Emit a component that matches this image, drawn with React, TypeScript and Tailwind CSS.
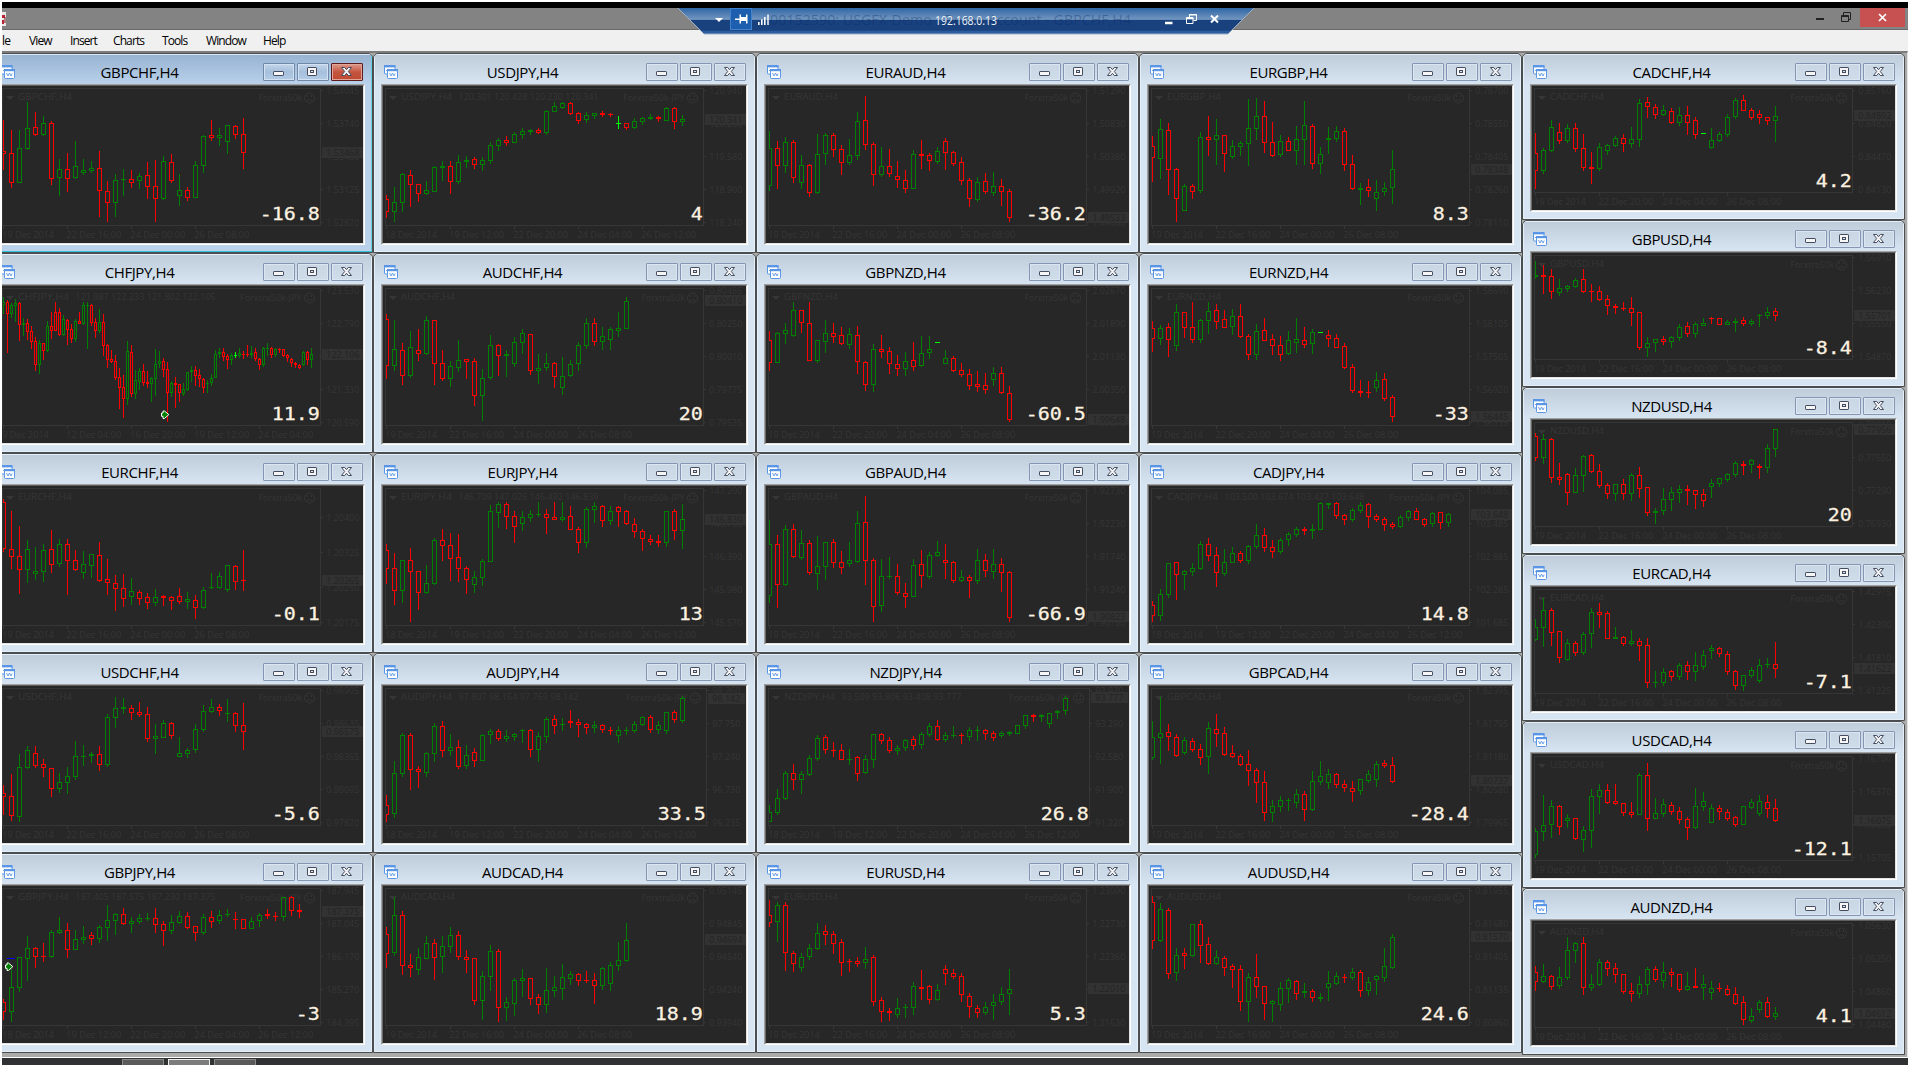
import React from "react";

type Quote = {
  symbol: string;
  pips: string;
  /** feed units per screen pixel and the pixel row where the chart starts */
  unit: number;
  origin: number;
  axis: string[];
  axisY?: number[];
  price: [string, number];
  dates: string[];
  ohlc?: string;
  step?: number;
  right?: number;
  marker?: [number, number];
  dash?: [number, number];
  feed: string;
};

const DATES_A = ["19 Dec 2014", "22 Dec 16:00", "24 Dec 00:00", "26 Dec 08:00"];
const DATES_B = ["19 Dec 2014", "22 Dec 20:00", "24 Dec 04:00", "26 Dec 08:00"];
const DATES_J = ["18 Dec 2014", "19 Dec 12:00", "22 Dec 20:00", "24 Dec 04:00", "26 Dec 12:00"];
const DATES_C = ["9 Dec 2014", "12 Dec 04:00", "16 Dec 20:00", "19 Dec 12:00", "24 Dec 04:00"];

// Each feed entry: colour letter, then high, body top, body bottom and low.
const GBPCHF: Quote = {
  symbol: "GBPCHF", pips: "-16.8", unit: 3, origin: 86, dates: DATES_A,
  axis: ["1.54045", "1.53740", "1.53430", "1.53125", "1.52820"], price: ["1.53468", 66],
  feed: "r360,453,461,510 r390,459,548,563 g390,444,548,548 g306,384,447,449 r336,381,405,407 g348,369,405,408 r363,369,537,554 g477,507,534,587 r459,507,537,575 g423,498,534,537 g477,510,518,524 g483,504,514,519 r453,504,573,650 r543,573,608,665 g522,540,608,650 g507,537,540,587 r510,537,549,563 g519,528,543,566 r486,525,561,597 r480,558,597,665 g468,483,597,600 r462,486,543,548 g522,570,588,617 r561,570,594,602 g483,495,593,594 g405,408,498,518 r360,405,413,423 g384,405,413,438 g375,375,426,461 r375,378,405,417 r354,402,458,507",
};
const CHFJPY: Quote = {
  symbol: "CHFJPY", pips: "11.9", unit: 3, origin: 286, dates: DATES_C, step: 4, marker: [161, 124],
  ohlc: "121.987 122.233 121.802 122.106",
  axis: ["123.530", "122.790", "122.060", "121.330", "120.590"], price: ["122.106", 68],
  feed: "g891,906,914,941 r900,906,941,1058 g909,915,941,953 g897,909,917,965 r906,909,974,1022 g954,969,974,1008 r957,969,995,1020 r978,993,1025,1047 r1010,1023,1094,1113 g1020,1029,1094,1121 r1029,1030,1053,1080 g963,978,1053,1056 r936,978,992,1016 r906,936,992,992 r924,936,1005,1007 g945,957,1005,1007 r957,960,990,1035 r972,987,1018,1030 g957,963,1017,1026 r936,963,971,973 g906,915,971,974 g906,915,918,1047 r912,915,969,977 r954,966,992,1013 g927,966,992,998 r942,966,1038,1068 r1032,1035,1080,1104 r1050,1078,1085,1090 r1065,1083,1133,1140 r1104,1131,1163,1226 r1125,1161,1197,1253 g1023,1053,1197,1214 r1035,1055,1181,1192 g1110,1140,1181,1197 g1104,1113,1145,1170 r1092,1113,1150,1157 r1113,1147,1151,1165 g1130,1134,1151,1205 g1047,1092,1136,1188 g1053,1083,1092,1104 r1074,1083,1109,1130 r1086,1107,1180,1265 g1143,1149,1180,1190 r1131,1150,1155,1224 r1152,1152,1180,1205 g1150,1167,1183,1187 g1116,1116,1170,1173 g1098,1110,1117,1145 r1098,1110,1127,1158 r1107,1125,1138,1160 r1134,1137,1163,1180 g1140,1148,1151,1178 g1122,1134,1149,1158 g1050,1062,1133,1133 g1044,1056,1063,1075 r1044,1056,1070,1083 r1062,1068,1080,1106 g1059,1065,1080,1094 l1056,1065,1067,1074 g1044,1059,1067,1074 r1053,1062,1066,1078 r1035,1062,1066,1070 g1038,1060,1066,1074 r1044,1056,1077,1083 r1074,1077,1094,1110 g1040,1044,1094,1100 g1029,1044,1047,1068 r1041,1044,1065,1074 g1044,1047,1065,1071 r1044,1046,1049,1060 r1047,1047,1067,1071 r1062,1065,1075,1085 r1074,1077,1090,1102 r1086,1090,1095,1104 r1092,1095,1103,1106 g1053,1056,1094,1098 r1053,1056,1080,1094 g1044,1062,1080,1104",
};
const EURCHF: Quote = {
  symbol: "EURCHF", pips: "-0.1", unit: 2.505, origin: 36, dates: DATES_A,
  axis: ["1.20400", "1.20325", "1.20250", "1.20175"], axisY: [31, 66, 101, 136], price: ["1.20265", 94],
  feed: "r123,131,248,255 r153,248,268,298 r190,266,300,361 g225,248,300,333 g243,303,311,326 g235,250,305,331 r200,248,288,308 g223,235,286,293 r223,235,278,363 r250,276,300,303 g253,286,308,323 g261,261,291,321 r230,263,328,330 r273,323,333,363 r314,333,348,403 r311,345,373,393 g321,353,368,388 r350,355,373,388 r358,368,383,398 g348,368,383,391 r363,366,370,391 r365,367,378,401 r345,365,381,386 g355,373,381,398 r363,376,396,423 g343,350,396,398 g308,343,346,348 g306,316,346,348 g288,288,351,356 r288,291,331,351 r250,325,328,353",
};
const USDCHF: Quote = {
  symbol: "USDCHF", pips: "-5.6", unit: 2.505, origin: 236, dates: DATES_A,
  axis: ["0.98905", "0.98635", "0.98365", "0.98095", "0.97820"], price: ["0.98575", 45],
  feed: "r839,859,869,914 r812,867,917,929 g761,794,919,932 g741,751,797,799 r741,759,792,797 r774,787,797,819 r797,797,850,869 g809,832,850,859 g794,817,834,862 g729,766,819,827 g739,766,769,792 g756,762,767,784 r741,761,789,804 g661,669,789,794 g619,646,671,696 g621,643,648,661 r639,646,659,676 r631,656,664,669 r644,661,724,731 g686,716,724,761 g676,684,721,721 r681,684,716,724 g719,759,770,770 g746,751,761,771 g686,699,751,759 g639,654,701,706 g624,644,656,659 r636,644,654,666 g624,659,661,681 r656,659,691,706 r634,689,706,751",
};
const GBPJPY: Quote = {
  symbol: "GBPJPY", pips: "-3", unit: 2.505, origin: 436, dates: DATES_J, marker: [5, 76], dash: [7, 72],
  ohlc: "187.405 187.575 187.230 187.375",
  axis: ["187.945", "187.045", "186.170", "185.270", "184.395"], price: ["187.375", 25],
  feed: "r1375,1383,1407,1428 g1300,1345,1408,1433 g1270,1270,1348,1358 g1217,1248,1274,1330 r1245,1248,1270,1297 r1235,1267,1271,1282 g1202,1207,1270,1272 g1170,1202,1209,1212 r1185,1202,1252,1272 g1202,1225,1252,1252 g1192,1220,1227,1237 r1207,1215,1225,1240 g1190,1195,1225,1235 g1139,1177,1197,1230 g1160,1163,1179,1215 r1147,1162,1187,1190 g1170,1180,1187,1210 g1162,1172,1182,1187 g1160,1172,1174,1180 r1147,1172,1190,1210 r1180,1187,1204,1242 g1164,1182,1204,1212 g1155,1167,1184,1187 r1157,1167,1197,1200 r1192,1192,1209,1230 g1162,1170,1209,1215 r1155,1170,1182,1197 g1152,1164,1180,1187 g1150,1162,1165,1170 r1157,1175,1178,1200 r1175,1175,1199,1200 g1170,1179,1199,1200 g1160,1164,1180,1195 r1150,1162,1168,1175 r1157,1167,1171,1180 g1120,1120,1170,1180 r1118,1120,1155,1167 r1137,1152,1157,1172",
};
const USDJPY: Quote = {
  symbol: "USDJPY", pips: "4", unit: 3, origin: 36, dates: DATES_J,
  ohlc: "120.301 120.428 120.230 120.341",
  axis: ["120.940", "120.260", "119.580", "118.900", "118.240"], price: ["120.341", 33],
  feed: "r436,448,486,503 g411,456,486,515 g368,372,459,486 r361,375,405,470 r402,402,431,455 g393,420,431,434 g348,351,425,425 g333,348,353,392 r333,348,396,431 g315,336,396,401 g318,330,335,353 r321,327,345,356 g321,330,345,362 g276,285,332,341 g264,270,287,302 r258,270,278,287 g246,252,279,279 g234,243,255,266 g237,240,245,254 r234,240,249,252 g180,183,249,254 g156,168,185,185 g156,159,174,177 r156,159,191,194 r186,189,213,221 g186,195,210,218 g189,189,198,206 r183,190,195,200 r189,192,196,200 l198,219,222,237 r219,219,234,239 g204,213,234,237 g201,204,215,224 g192,202,206,209 r197,202,207,215 g171,174,212,212 r171,174,215,236 g195,207,215,227",
};
const AUDCHF: Quote = {
  symbol: "AUDCHF", pips: "20", unit: 3, origin: 236, dates: DATES_A,
  axis: ["0.80485", "0.80250", "0.80010", "0.79775", "0.79535"], price: ["0.80410", 14],
  feed: "r792,807,947,986 g810,897,948,962 r879,900,977,1004 g843,891,977,984 r837,900,911,932 g798,810,912,914 r810,810,941,1004 r900,939,987,992 g933,948,987,1010 g870,930,953,966 r927,927,935,986 r924,933,1038,1067 g957,984,1038,1112 g855,885,984,989 r882,885,917,977 g900,912,917,980 g861,876,941,950 g837,849,878,911 r852,852,963,974 g912,954,963,1001 g909,939,953,962 r936,939,980,1013 g921,978,1014,1034 g930,942,977,980 g876,885,941,962 g804,819,887,896 r804,819,875,887 g831,858,875,899 g831,837,870,899 g786,834,842,860 g741,753,836,838",
};
const EURJPY: Quote = {
  symbol: "EURJPY", pips: "13", unit: 2.505, origin: 36, dates: DATES_J,
  ohlc: "146.709 147.026 146.492 146.839",
  axis: ["147.200", "146.790", "146.390", "145.980", "145.570"], price: ["146.839", 33],
  feed: "r235,250,298,335 r258,296,353,388 g275,276,353,383 r245,276,305,431 r303,303,358,401 g288,333,358,361 g220,225,335,338 r198,225,240,278 r208,238,273,328 r210,268,298,331 r291,296,325,361 g303,318,338,358 g273,278,320,341 g138,153,280,280 g130,135,158,195 r130,135,168,198 r153,165,193,233 g153,168,185,203 g150,160,170,180 g130,160,163,168 r148,160,170,210 r130,168,175,175 g130,168,175,180 r140,165,200,200 r193,198,233,258 g143,148,233,245 g130,140,150,183 r138,140,178,193 g140,153,178,188 r140,143,155,193 r150,153,185,188 r170,185,205,220 r198,203,223,253 r213,223,230,238 r213,228,233,243 g153,153,233,243 r148,153,203,225 g135,173,203,248",
};
const AUDJPY: Quote = {
  symbol: "AUDJPY", pips: "33.5", unit: 2.505, origin: 236, dates: DATES_J, right: 323,
  ohlc: "97.807 98.164 97.769 98.142",
  axis: ["98.260", "97.750", "97.240", "96.730", "96.235"], price: ["98.142", 12],
  feed: "r864,889,914,932 g779,809,912,922 g709,714,812,819 r709,714,802,852 r791,799,807,847 g756,759,809,819 g684,691,761,781 r679,691,754,769 g711,744,754,766 r726,744,794,799 g739,764,792,799 r746,756,779,794 g711,714,779,779 g699,704,714,736 r699,704,724,729 g701,716,724,731 g709,711,719,729 g699,701,705,734 r699,701,751,769 g706,716,751,781 g669,674,719,734 r664,674,691,711 g671,686,690,704 r651,680,684,696 r674,681,689,719 r684,686,696,711 g679,689,696,709 r686,689,701,709 r694,701,704,714 g691,701,716,734 g694,702,704,714 g679,686,704,709 g666,669,689,691 r664,669,701,709 g679,689,701,711 g656,656,704,711 r651,656,676,684 g616,621,679,684",
};
const AUDCAD: Quote = {
  symbol: "AUDCAD", pips: "18.9", unit: 2.505, origin: 436, dates: DATES_A,
  axis: ["0.95145", "0.94845", "0.94540", "0.94240", "0.93940"], price: ["0.94694", 53],
  feed: "r1195,1212,1262,1297 g1120,1165,1260,1267 r1155,1165,1292,1315 r1262,1290,1297,1320 g1247,1270,1302,1315 g1217,1235,1275,1275 r1225,1235,1272,1328 g1217,1242,1270,1310 g1195,1215,1245,1260 r1205,1215,1270,1277 r1252,1270,1277,1310 r1272,1272,1380,1390 g1305,1318,1380,1428 g1240,1255,1320,1355 r1250,1255,1398,1433 g1370,1383,1398,1430 g1323,1328,1388,1418 g1300,1323,1330,1370 r1323,1323,1375,1390 r1363,1370,1390,1413 g1297,1353,1390,1410 g1318,1345,1355,1370 g1287,1320,1350,1378 g1305,1313,1325,1340 r1310,1313,1330,1343 r1305,1328,1331,1335 r1310,1328,1343,1388 g1295,1297,1343,1353 g1282,1290,1338,1355 g1232,1277,1292,1305 g1185,1227,1280,1282",
};
const EURAUD: Quote = {
  symbol: "EURAUD", pips: "-36.2", unit: 3, origin: 36, dates: DATES_A,
  axis: ["1.51290", "1.50830", "1.50380", "1.49920", "1.49460"], price: ["1.49533", 131],
  feed: "g243,294,407,422 r273,294,347,416 g261,276,347,368 r270,276,383,398 g315,345,398,416 r342,345,429,440 g252,312,429,431 g249,255,311,344 r249,255,299,321 r285,297,339,374 g267,315,339,344 g186,213,317,329 r138,210,285,299 r276,282,374,407 g291,348,374,381 r297,348,371,381 r333,378,389,413 r360,390,416,428 g300,312,416,416 r270,312,317,356 r309,315,332,362 g291,303,335,341 r264,273,308,359 r303,306,341,347 r321,336,392,404 r384,390,446,470 g381,396,449,455 r369,393,425,431 g366,408,429,437 r387,408,425,467 r417,423,503,515",
};
const GBPNZD: Quote = {
  symbol: "GBPNZD", pips: "-60.5", unit: 3, origin: 236, dates: DATES_B,
  axis: ["2.02670", "2.01890", "2.01130", "2.00350", "1.99570"], price: ["1.99648", 133],
  feed: "r843,870,938,962 g846,849,938,938 g819,840,851,881 g756,780,858,861 r780,780,819,849 r756,819,933,933 g870,870,933,938 g810,849,875,908 r819,849,860,878 r831,855,882,884 g834,852,885,896 r828,855,935,971 r933,936,1004,1022 g882,897,1004,1025 r855,897,905,923 r891,903,941,971 r915,942,956,977 g906,933,956,977 r876,930,950,962 g858,909,948,950 g858,897,908,926 l876,876,880,880 g900,924,941,941 r918,924,963,965 r939,960,974,980 r957,972,1007,1019 r963,1002,1010,1025 r969,1005,1019,1031 g951,969,989,1007 r951,969,1029,1031 r1008,1029,1109,1115",
};
const GBPAUD: Quote = {
  symbol: "GBPAUD", pips: "-66.9", unit: 2.505, origin: 36, dates: DATES_A,
  axis: ["1.92730", "1.92230", "1.91740", "1.91240", "1.90750"], price: ["1.90823", 130],
  feed: "g175,235,365,383 r213,235,338,395 g188,198,338,341 r185,198,268,270 g200,233,270,276 r225,233,308,313 g215,291,311,351 g230,230,293,326 r223,230,283,295 r253,281,296,311 g230,276,286,293 g153,183,281,283 r115,180,278,338 r271,276,393,431 g273,316,391,406 g268,316,319,323 r286,316,358,363 r333,358,368,396 g273,288,368,368 r250,286,316,346 g255,263,318,323 g228,255,265,268 r235,276,283,323 r278,281,328,333 g301,318,328,331 r313,318,328,371 g248,276,328,336 r260,276,303,318 g248,286,306,323 r271,286,308,356 r303,306,421,431",
};
const NZDJPY: Quote = {
  symbol: "NZDJPY", pips: "26.8", unit: 2.505, origin: 236, dates: DATES_J, right: 323,
  ohlc: "93.509 93.806 93.408 93.777",
  axis: ["93.920", "93.290", "92.580", "91.900", "91.220"], price: ["93.777", 11],
  feed: "g889,907,932,932 g849,872,909,914 g804,809,874,877 r787,809,827,852 g804,812,827,862 g764,771,814,817 g714,721,774,779 r714,719,751,761 r731,751,754,769 r736,751,777,777 g749,774,776,789 r766,769,812,829 g764,774,809,812 g711,711,777,797 r709,711,729,736 r719,726,754,759 g739,746,754,764 g724,726,746,754 r716,724,741,751 g706,711,739,749 g684,691,714,719 r676,691,727,729 g706,714,727,731 g691,713,716,721 r709,713,717,736 g694,701,719,729 g691,701,704,729 r699,702,711,727 r704,709,721,729 g704,709,717,721 g704,706,711,716 g689,689,711,711 g664,664,691,699 r661,664,668,681 g661,665,668,681 g659,659,686,696 g651,654,660,674 g616,621,654,664",
};
const EURUSD: Quote = {
  symbol: "EURUSD", pips: "5.3", unit: 2.505, origin: 436, dates: DATES_A,
  axis: ["1.23090", "1.22730", "1.22360", "1.21995", "1.21630"], price: ["1.22010", 102],
  feed: "r1127,1165,1185,1195 g1132,1140,1182,1232 r1132,1140,1260,1305 r1255,1260,1287,1308 g1260,1270,1297,1308 g1237,1247,1270,1277 g1185,1210,1250,1252 r1190,1205,1215,1240 r1205,1212,1237,1262 r1225,1232,1285,1318 r1275,1280,1283,1308 r1270,1280,1287,1295 g1245,1275,1285,1300 r1265,1270,1383,1393 r1370,1378,1408,1433 r1398,1406,1410,1430 g1373,1398,1415,1423 g1388,1395,1399,1423 g1333,1343,1398,1415 r1302,1345,1349,1378 r1340,1343,1378,1388 g1338,1353,1378,1380 r1290,1300,1313,1340 r1300,1310,1320,1325 r1310,1318,1365,1383 r1360,1368,1396,1423 r1390,1398,1410,1423 g1383,1395,1410,1415 g1363,1383,1393,1428 g1345,1363,1383,1390 g1300,1350,1362,1415",
};
const EURGBP: Quote = {
  symbol: "EURGBP", pips: "8.3", unit: 3, origin: 36, dates: DATES_A,
  axis: ["0.78700", "0.78550", "0.78405", "0.78260", "0.78110"], price: ["0.78348", 83],
  feed: "r258,288,323,395 g207,237,326,386 r219,240,359,434 r354,357,446,515 g402,408,482,482 r402,408,425,446 g246,261,422,428 r198,261,269,317 g207,255,269,344 r255,255,311,365 g270,288,320,326 g273,279,290,317 g147,234,281,347 g144,198,236,269 r153,198,278,308 r216,276,317,320 g255,273,314,320 r261,273,302,302 g228,267,302,344 g153,225,269,344 r222,228,341,356 g291,312,341,371 g231,264,269,311 g228,243,266,275 r234,243,345,362 r315,342,416,419 g399,414,419,464 r387,411,422,440 g390,426,446,482 g396,414,425,437 g300,357,413,461",
};
const EURNZD: Quote = {
  symbol: "EURNZD", pips: "-33", unit: 3, origin: 236, dates: DATES_B,
  axis: ["1.58690", "1.58105", "1.57505", "1.56920", "1.56335"], price: ["1.56445", 130],
  feed: "r813,834,866,905 g825,834,866,884 r819,831,869,920 g762,786,887,902 r786,786,833,863 r756,831,869,878 g807,810,869,878 g756,783,812,851 r762,780,815,836 r780,807,833,833 g777,798,830,854 r762,798,860,863 r852,858,915,929 g822,843,915,929 r804,840,872,872 r852,867,887,914 r858,885,914,932 g843,870,912,914 g804,867,878,908 r831,870,885,893 g837,846,881,911 l846,846,850,850 r840,855,866,890 r852,864,893,893 r879,888,954,956 r942,951,1022,1028 r990,1023,1028,1040 r993,1026,1029,1043 g966,990,1014,1025 r969,987,1046,1052 r1035,1041,1101,1115",
};
const CADJPY: Quote = {
  symbol: "CADJPY", pips: "14.8", unit: 2.505, origin: 36, dates: DATES_J,
  ohlc: "103.500 103.674 103.427 103.648",
  axis: ["104.085", "103.485", "102.885", "102.285", "101.685"], price: ["103.648", 28],
  feed: "r378,388,416,431 g348,361,416,428 g283,283,363,371 r281,281,313,376 g301,303,313,351 g283,296,305,316 g228,235,298,300 r220,235,265,278 r243,263,308,343 g248,281,311,316 g243,258,283,283 r253,258,278,283 g238,240,278,286 g185,213,243,248 r195,213,245,255 r225,243,255,271 g220,225,255,260 g205,210,225,240 g193,198,213,218 r193,199,203,213 g185,199,202,223 g130,133,200,200 g133,134,137,148 r130,133,165,173 r160,163,175,188 g145,150,175,180 g130,138,153,158 r133,135,168,195 r160,165,175,180 r168,173,188,203 r180,185,193,198 g163,168,193,195 g150,153,170,178 r145,153,175,175 r170,173,188,193 g155,158,185,193 r155,155,183,198 g158,160,183,193",
};
const GBPCAD: Quote = {
  symbol: "GBPCAD", pips: "-28.4", unit: 2.505, origin: 236, dates: DATES_A,
  axis: ["1.82395", "1.81795", "1.81180", "1.80580", "1.79965"], price: ["1.80737", 94],
  feed: "g679,719,771,776 g619,709,721,787 r686,706,719,754 r711,719,766,769 g719,726,759,764 r721,729,751,756 r736,749,771,789 g681,696,769,812 r661,699,711,744 r694,709,764,766 r739,759,769,771 r761,766,789,791 r751,787,804,842 r797,802,834,884 r804,832,909,929 g877,892,909,932 g867,877,894,907 g872,877,880,904 g849,862,884,897 r854,862,902,929 g804,829,902,904 g779,817,832,839 g799,812,834,849 r809,812,839,847 r827,837,847,857 r829,847,857,882 g824,824,854,864 g802,812,829,834 g779,787,827,844 r776,784,792,797 r769,789,832,834",
};
const AUDUSD: Quote = {
  symbol: "AUDUSD", pips: "24.6", unit: 2.505, origin: 436, dates: DATES_A,
  axis: ["0.81955", "0.81680", "0.81405", "0.81135", "0.80860"], price: ["0.81570", 50],
  feed: "r1117,1132,1230,1250 g1135,1150,1230,1232 r1147,1152,1313,1325 g1247,1265,1310,1330 r1247,1260,1268,1300 g1187,1187,1267,1270 r1177,1187,1242,1285 r1220,1237,1287,1290 g1252,1270,1287,1290 r1267,1272,1297,1318 r1287,1292,1302,1348 r1290,1300,1383,1405 g1310,1320,1383,1433 r1262,1320,1345,1373 r1343,1343,1388,1428 g1378,1380,1388,1433 g1333,1348,1390,1405 g1323,1328,1350,1385 r1328,1330,1363,1378 g1335,1355,1360,1373 r1350,1355,1372,1383 g1360,1369,1374,1383 g1305,1335,1348,1380 g1308,1318,1338,1340 r1313,1320,1323,1335 g1297,1308,1323,1328 r1302,1308,1355,1370 g1320,1333,1355,1368 g1315,1318,1328,1365 g1247,1292,1323,1333 g1212,1220,1297,1300",
};
const CADCHF: Quote = {
  symbol: "CADCHF", pips: "4.2", unit: 2.8, origin: 86, dates: DATES_B,
  axis: ["0.85160", "0.84820", "0.84470", "0.84130"], price: ["0.84892", 29],
  feed: "r372,429,479,529 g415,421,479,487 g336,356,423,426 r345,370,395,402 g348,359,395,400 r345,359,417,426 r375,415,470,479 r426,468,473,515 g401,412,473,479 g402,407,423,433 g382,387,409,412 r375,387,403,426 g356,390,403,413 g277,289,391,412 r272,286,300,329 r291,300,322,333 g294,308,322,325 r303,311,344,348 g300,322,343,352 r297,322,343,377 r328,336,378,389 l372,372,375,375 g359,392,414,417 g370,375,395,398 g319,328,378,383 g274,281,328,333 r266,281,311,311 r302,308,330,335 r308,319,330,347 r328,328,340,350 g297,325,340,398",
};
const GBPUSD: Quote = {
  symbol: "GBPUSD", pips: "-8.4", unit: 2.8, origin: 253, dates: DATES_A,
  axis: ["1.56910", "1.56230", "1.55550", "1.54870"], price: ["1.55701", 62],
  feed: "g731,771,775,781 r742,770,775,822 r753,772,818,836 g781,806,820,829 g797,802,809,818 g778,784,804,806 r753,781,818,820 r795,815,818,846 r801,815,840,843 r826,837,857,882 r851,857,862,880 r846,861,866,871 r832,862,876,913 r874,874,974,980 g944,960,974,999 g949,949,961,986 r941,949,958,966 g941,944,958,974 g908,915,947,955 r902,912,935,944 g902,908,935,945 g890,904,912,913 r888,890,894,908 r890,890,910,910 g896,902,910,910 g890,900,905,930 r888,896,908,913 g894,898,908,913 g878,881,886,916 g860,874,885,892 r862,871,885,899",
};
const NZDUSD: Quote = {
  symbol: "NZDUSD", pips: "20", unit: 2.8, origin: 420, dates: DATES_A,
  axis: ["0.78010", "0.77650", "0.77290", "0.76930"], price: ["0.77956", 9],
  feed: "r1212,1221,1282,1291 g1215,1229,1282,1299 r1226,1230,1338,1352 r1296,1335,1344,1358 r1324,1327,1380,1414 g1310,1330,1380,1380 g1274,1276,1333,1378 r1271,1274,1322,1324 r1299,1319,1361,1366 r1352,1358,1383,1397 g1355,1355,1383,1403 r1341,1355,1383,1400 g1324,1330,1383,1403 r1308,1330,1369,1394 r1364,1364,1437,1445 g1422,1431,1436,1467 g1366,1397,1431,1442 g1364,1378,1400,1431 g1358,1369,1380,1408 r1358,1369,1374,1414 r1372,1372,1386,1425 r1369,1383,1403,1420 g1341,1352,1364,1394 g1338,1338,1355,1364 g1324,1327,1343,1350 g1291,1296,1330,1336 r1291,1299,1304,1330 g1285,1288,1302,1324 r1299,1305,1310,1341 g1243,1254,1310,1324 g1201,1201,1257,1280",
};
const EURCAD: Quote = {
  symbol: "EURCAD", pips: "-7.1", unit: 2.981, origin: 37, dates: DATES_A,
  axis: ["1.42975", "1.42390", "1.41810", "1.41225"], price: ["1.41622", 81],
  feed: "g206,230,268,270 g143,179,233,289 r173,179,247,286 r241,241,322,337 g265,277,328,330 r271,277,307,316 g244,250,307,312 g173,185,250,292 r158,185,194,233 r182,188,265,265 g230,259,265,265 r256,259,280,286 g238,271,280,286 r262,271,286,331 r262,283,396,411 g361,393,396,410 g352,364,396,405 r358,361,378,391 g337,343,379,388 r331,343,364,388 g304,343,364,391 g298,313,349,358 g283,292,301,324 r289,292,310,319 r301,310,363,373 r358,361,405,417 g373,373,405,420 g349,358,376,382 g325,343,391,396 g322,340,343,352 r274,340,355,382",
};
const USDCAD: Quote = {
  symbol: "USDCAD", pips: "-12.1", unit: 2.981, origin: 204, dates: DATES_A,
  axis: ["1.16700", "1.16370", "1.16035", "1.15705"], price: ["1.16075", 66],
  feed: "g828,837,909,918 g730,820,841,867 g745,763,820,859 r760,763,826,850 g787,799,808,829 r799,799,862,864 g823,835,865,900 g712,733,838,888 g698,715,736,787 r698,715,754,757 r698,748,757,760 r754,754,784,793 r751,781,790,799 g664,671,790,790 r635,671,802,838 g739,784,802,802 g742,757,787,796 r751,760,781,790 r766,778,805,817 r796,802,829,864 g709,763,829,832 g721,748,766,778 g757,769,814,814 r760,769,781,805 r772,781,802,808 r793,796,820,826 g763,763,820,820 g742,751,769,772 g730,748,787,793 r730,751,772,799 r742,769,808,811",
};
const AUDNZD: Quote = {
  symbol: "AUDNZD", pips: "4.1", unit: 2.981, origin: 371, dates: DATES_A,
  axis: ["1.05630", "1.05250", "1.04860", "1.04480"], price: ["1.04612", 92],
  feed: "r1240,1258,1288,1315 g1234,1270,1288,1291 r1267,1270,1303,1312 g1243,1273,1300,1309 g1154,1193,1276,1282 g1169,1172,1196,1231 r1154,1172,1306,1328 g1264,1294,1306,1315 g1219,1228,1297,1300 r1222,1228,1249,1270 r1231,1246,1267,1291 r1264,1264,1318,1324 r1291,1315,1324,1347 g1270,1294,1324,1336 g1243,1249,1297,1327 r1240,1249,1282,1288 g1228,1258,1285,1306 r1246,1258,1267,1303 r1264,1264,1312,1318 g1258,1300,1312,1315 r1246,1300,1305,1306 g1267,1294,1306,1341 g1285,1306,1321,1342 r1291,1306,1309,1318 r1297,1309,1327,1330 r1303,1324,1353,1357 r1330,1348,1401,1417 g1366,1389,1404,1411 g1342,1348,1372,1380 r1333,1348,1393,1396 g1363,1381,1393,1402",
};

const COLUMNS: Quote[][] = [
  [GBPCHF, CHFJPY, EURCHF, USDCHF, GBPJPY],
  [USDJPY, AUDCHF, EURJPY, AUDJPY, AUDCAD],
  [EURAUD, GBPNZD, GBPAUD, NZDJPY, EURUSD],
  [EURGBP, EURNZD, CADJPY, GBPCAD, AUDUSD],
];
const LAST_COLUMN: Quote[] = [CADCHF, GBPUSD, NZDUSD, EURCAD, USDCAD, AUDNZD];

const INK: Record<string, string> = { r: "#ff0000", g: "#008000", l: "#00ff00" };
const DIM = "#363636";

function Candles({ quote }: { quote: Quote }) {
  const step = quote.step ?? 8;
  const half = step === 8 ? 2 : 1;
  return (
    <g shapeRendering="crispEdges">
      {quote.feed.split(" ").map((entry, i) => {
        const color = INK[entry[0]];
        const [hi, top, bottom, lo] = entry
          .slice(1)
          .split(",")
          .map((v) => Math.round(Number(v) / quote.unit) - quote.origin);
        const x = 3 + step * i;
        const left = i === 0 ? x : x - half;
        const width = x + half + 1 - left;
        const h = Math.max(1, bottom - top);
        return (
          <g key={i} fill={color}>
            {top > hi && <rect x={x} y={hi} width={1} height={top - hi} />}
            {lo > bottom && <rect x={x} y={top + h} width={1} height={Math.max(0, lo - top - h)} />}
            <rect x={left} y={top} width={width} height={1} />
            <rect x={left} y={top + h - 1} width={width} height={1} />
            {i > 0 && h > 1 && <rect x={left} y={top} width={1} height={h} />}
            {h > 1 && <rect x={x + half} y={top} width={1} height={h} />}
          </g>
        );
      })}
    </g>
  );
}

function Chart({ quote, height }: { quote: Quote; height: number }) {
  const right = quote.right ?? 320;
  const bottom = height - 18;
  const jpy = Boolean(quote.ohlc);
  const shift = right - 320;
  const ys = quote.axisY ?? [4, 37, 70, 103, 136];
  const labelWidth = quote.right ? 28 : 33;
  const faceX = 309.5 + shift;
  return (
    <svg width={363} height={height} className="block bg-[#272727] font-['Open_Sans',sans-serif]">
      <g fill={DIM} stroke="none" shapeRendering="crispEdges">
        <rect x={2} y={2} width={right - 1} height={1} />
        <rect x={2} y={2} width={1} height={bottom - 1} />
        <rect x={2} y={bottom} width={right - 1} height={1} />
        <rect x={right} y={2} width={1} height={bottom - 1} />
        {quote.axis.map((label, i) => (
          <rect key={label} x={right + 1} y={ys[i]} width={2} height={1} />
        ))}
        {quote.dates.map((label, i) => (
          <rect key={label} x={3 + 64 * i} y={bottom + 1} width={1} height={3} />
        ))}
      </g>
      <g fill={DIM} fontSize={9}>
        <path d="M6 10h8l-4 4z" />
        <text x={18} y={14} fontSize={9.5} textLength={quote.symbol.endsWith("JPY") ? 51 : 54} lengthAdjust="spacingAndGlyphs">
          {quote.symbol},H4
        </text>
        {quote.ohlc && (
          <text x={75.5} y={14} fontSize={9.5} textLength={quote.right ? 120 : 140} lengthAdjust="spacingAndGlyphs">
            {quote.ohlc}
          </text>
        )}
        <text x={(jpy ? 240 : 258.5) + shift} y={15} textLength={jpy ? 61.5 : 43.5} lengthAdjust="spacingAndGlyphs">
          {jpy ? "Forxtra50k-JPY" : "Forxtra50k"}
        </text>
        <g fill="none" stroke={DIM}>
          <circle cx={faceX} cy={12} r={5} />
          <path
            d={
              jpy
                ? `M${faceX - 3} 13q3 3 6 0M${faceX - 2} 9v2M${faceX + 2} 9v2`
                : `M${faceX - 3} 15q3 -3 6 0M${faceX - 2} 9v2M${faceX + 2} 9v2`
            }
          />
        </g>
        {quote.axis.map((label, i) => (
          <text key={label} x={right + 6.3} y={ys[i] + 3.5} textLength={labelWidth} lengthAdjust="spacingAndGlyphs">
            {label}
          </text>
        ))}
        {quote.dates.map((label, i) => (
          <text
            key={label}
            x={2.3 + 64 * i}
            y={height - 5}
            textLength={i === 0 ? (label.length === 10 ? 46.5 : 51.5) : 55}
            lengthAdjust="spacingAndGlyphs"
          >
            {label}
          </text>
        ))}
        <rect x={right + 2} y={quote.price[1] - 5} width={quote.right ? 37 : 41} height={11} fill="#323232" />
        <text x={right + 6.3} y={quote.price[1] + 4} fill="#242424" textLength={labelWidth} lengthAdjust="spacingAndGlyphs">
          {quote.price[0]}
        </text>
      </g>
      <Candles quote={quote} />
      {quote.dash && <rect x={quote.dash[0]} y={quote.dash[1]} width={8} height={1} fill="#0000ff" />}
      {quote.marker && (
        <path
          transform={`translate(${quote.marker[0]} ${quote.marker[1]})`}
          d="M.5 3H2V1h1.5l4.3 3.6L3.5 8.5H2V6.3H.5z"
          fill="#008000"
          stroke="#fff"
          strokeWidth={1}
        />
      )}
      <text
        transform={`translate(${right - 0.2} ${height - 23}) scale(1 .85)`}
        textAnchor="end"
        fontSize={20}
        fill="#fdf2e0"
        stroke="#fdf2e0"
        strokeWidth={0.3}
        fontFamily="'DejaVu Sans Mono', monospace"
      >
        {quote.pips}
      </text>
    </svg>
  );
}

function ChartIcon() {
  return (
    <svg width={14} height={14} viewBox="0 0 14 14" className="shrink-0">
      <rect x=".5" y=".5" width="10.5" height="8.5" rx="1" fill="#fff" stroke="#5b96e6" />
      <rect x="0" y="0" width="11.5" height="2.4" fill="#5b96e6" />
      <path d="M2 5.5h1.5l1-1.5 1 2.500 1-1.500" fill="none" stroke="#5b96e6" strokeWidth=".9" />
      <rect x="3.500" y="4.500" width="10" height="9" rx="1" fill="#fff" stroke="#5b96e6" />
      <rect x="3" y="4" width="11" height="2.200" fill="#5b96e6" />
      <path d="M5.500 8l1.500 3 1.500-3 1.500 3 1.200-2.500" fill="none" stroke="#5b96e6" strokeWidth=".9" />
    </svg>
  );
}

function CaptionButton({ kind, active }: { kind: "min" | "max" | "close"; active: boolean }) {
  const tone =
    active && kind === "close"
      ? "border-[#5c1a1d] bg-linear-to-b from-[#dd9a8c] via-[#c4543f] via-50% to-[#c04a30] shadow-[inset_0_0_0_1px_#e0a598]"
      : active
        ? "border-[#6f88a8] bg-linear-to-b from-[#c3d5ea] via-[#a5bfdc] via-50% to-[#b4cce6] shadow-[inset_0_0_0_1px_#d3e2f2]"
        : "border-[#8496b4] bg-linear-to-b from-[#c9d7e5] to-[#cfddeb] shadow-[inset_0_0_0_1px_#dbe6f1]";
  return (
    <div className={`flex h-[18px] w-[32px] items-center justify-center rounded-[1px] border ${tone}`}>
      <svg width={12} height={10} viewBox="0 0 12 10" stroke="#454c60" strokeWidth={1} fill="#f6f6f6">
        {kind === "min" && <rect x=".5" y="4.500" width="10" height="4" rx=".6" />}
        {kind === "max" && (
          <>
            <rect x=".5" y=".5" width="9" height="8" rx=".6" />
            <rect x="3.500" y="3.500" width="3" height="2" fill="#dbe5ef" />
          </>
        )}
        {kind === "close" && (
          <path d="M.5 .5h3.200l1.800 2.200 1.800-2.200h3.200l-3.200 4 3.200 4H7.300L5.500 6.300 3.700 8.500H.5l3.200-4z" strokeLinejoin="round" />
        )}
      </svg>
    </div>
  );
}

function ChartWindow({ quote, tall, active = false }: { quote: Quote; tall: boolean; active?: boolean }) {
  const size = tall ? "h-[200px]" : "h-[167px]";
  const skin = active
    ? "border-l-[#e6eef7] border-r-[#62cfe2] border-t-[#dbe9f7] border-b-[#35c3dc] bg-[#b9d1ea]"
    : "border-[#e6eef7] bg-[#d7e4f2]";
  const caption = active ? "from-[#98b3d2] to-[#b9d1ea]" : "from-[#bfcddb] to-[#d7e4f2]";
  return (
    <section className={`w-[383px] shrink-0 rounded-t-[5px] border border-[#4a4e50] ${size}`}>
      <div className={`flex h-full flex-col rounded-t-[4px] border ${skin}`}>
        <header className={`flex h-[29px] shrink-0 items-start bg-linear-to-b pt-[8px] pr-[8px] pl-[9px] ${caption}`}>
          <div className="pt-[2px]">
            <ChartIcon />
          </div>
          <h2 className="flex-1 pl-[1px] text-center font-['Open_Sans',sans-serif] text-[15px] leading-[18px] tracking-[-0.4px] text-black">
            {quote.symbol},H4
          </h2>
          <div className="flex gap-[2px]">
            <CaptionButton kind="min" active={active} />
            <CaptionButton kind="max" active={active} />
            <CaptionButton kind="close" active={active} />
          </div>
        </header>
        <div className="ml-[6px] w-[367px] border border-t-[#a0a0a0] border-r-white border-b-white border-l-[#a0a0a0]">
          <div className="border border-t-[#5f5f5f] border-r-[#e3e3e3] border-b-[#e3e3e3] border-l-[#696969]">
            <Chart quote={quote} height={tall ? 157 : 124} />
          </div>
        </div>
      </div>
    </section>
  );
}

function ConnectionBar() {
  return (
    <div className="absolute top-[6px] left-[676px] h-[27px] w-[577px]">
      <svg width={577} height={27} className="absolute inset-0">
        <defs>
          <linearGradient id="bar" x1="0" y1="0" x2="0" y2="1">
            <stop offset="0" stopColor="#2f66a5" />
            <stop offset=".44" stopColor="#7296c0" />
            <stop offset=".46" stopColor="#18417e" />
            <stop offset=".86" stopColor="#18417e" />
            <stop offset=".88" stopColor="#2b5c9f" />
            <stop offset="1" stopColor="#2b5c9f" />
          </linearGradient>
        </defs>
        <path d="M0 0H576L550 26H26z" fill="url(#bar)" />
        <path d="M0 0L26 26H550L576 0" fill="none" stroke="#9fb0c4" />
      </svg>
      <div className="relative flex h-[23px] items-center font-['Open_Sans',sans-serif]">
        <svg width={60} height={23} className="ml-[36px] shrink-0" fill="#fff">
          <path d="M1 10h8l-4 4z" />
          <rect x="16.500" y=".5" width="21" height="21" fill="#1d5fae" stroke="#3f83d0" />
          <path d="M21 10.500h4.500v-4h1.500v2.500h5v-2.500h1.500v9h-1.500v-2.500h-5v2.500h-1.500v-3.500H21z" />
          <path d="M44 17h1.600v-3H44zM47 17h1.600v-5.500H47zM50 17h1.600V9H50z" />
          <path d="M53 17h2V6.500h-2z" opacity=".7" />
        </svg>
        <svg width={363} height={23} className="absolute top-0 left-[92px]">
          <text x={0} y={17} fontSize={15} fill="#0b2a5e" fillOpacity={0.35} textLength={361} lengthAdjust="spacingAndGlyphs">
            00152590: USGFX-Demo - Demo Account - GBPCHF,H4
          </text>
        </svg>
        <svg width={64} height={23} className="absolute top-0 left-[257px]">
          <text x={0} y={17} fontSize={12} fill="#eef3f9" textLength={62} lengthAdjust="spacingAndGlyphs">
            192.168.0.13
          </text>
        </svg>
        <svg width={56} height={23} className="mr-[34px] ml-auto" fill="none" stroke="#fff">
          <path d="M0 15h7.500" strokeWidth="2.500" />
          <path d="M24.500 9.500V6.500h7v6h-3M24 7h8" />
          <path d="M21.500 9.500h6.500v6h-6.500zM21 10.500h7.500" />
          <path d="M46 7.500l7 7M53 7.500l-7 7" strokeWidth="2" />
        </svg>
      </div>
    </div>
  );
}

function TitleBar() {
  return (
    <div className="relative mt-[6px] flex h-[22px] shrink-0 items-start justify-between border-b border-[#6a6a6a] bg-[#838383]">
      <svg width={5} height={22}>
        <rect y="4" width="4" height="14" fill="#e8e8e8" />
        <path d="M0 7h3v3H0zM0 12h2v4H0z" fill="#b8232f" />
        <path d="M3 9v6" stroke="#7a1420" />
      </svg>
      <div className="flex h-[19px] items-center pr-[3px]">
        <svg width={60} height={19} className="block">
          <rect x="16" y="10" width="8" height="2" fill="#222" />
          <path d="M41.500 7.500h7v6h-7zM41.500 8.500h7M43.500 7V4.500h7v7H49" fill="none" stroke="#222" />
        </svg>
        <div className="flex h-[19px] w-[45px] items-center justify-center bg-[#c75050]">
          <svg width={9} height={9} stroke="#fff" strokeWidth={1.700}>
            <path d="M1 1l7 7M8 1L1 8" />
          </svg>
        </div>
      </div>
    </div>
  );
}

export default function App() {
  return (
    <div className="h-[1076px] w-[1916px] overflow-hidden bg-white pt-[2px] pl-[2px]">
      <main className="relative flex h-[1063px] w-[1906px] flex-col overflow-hidden bg-black">
        <TitleBar />
        <nav className="flex h-[21px] shrink-0 items-center bg-[#f0f0f0] font-['Open_Sans',sans-serif] text-[12px] leading-[20px] tracking-[-0.9px] text-black">
          <span className="w-[27px]">le</span>
          <span className="w-[41px]">View</span>
          <span className="w-[43px]">Insert</span>
          <span className="w-[49px]">Charts</span>
          <span className="w-[44px]">Tools</span>
          <span className="w-[57px]">Window</span>
          <span>Help</span>
        </nav>
        <div className="flex h-[1007px] shrink-0 items-start border-t-2 border-r border-b border-t-[#7c7c7c] border-r-[#e3e3e3] border-b-white bg-[#ababa9]">
          {COLUMNS.map((column, i) => (
            <div key={i} className={i === 0 ? "flex w-[371px] shrink-0 flex-col items-end overflow-hidden" : "flex flex-col"}>
              {column.map((quote) => (
                <ChartWindow key={quote.symbol} quote={quote} tall active={quote.symbol === "GBPCHF"} />
              ))}
            </div>
          ))}
          <div className="flex flex-col">
            {LAST_COLUMN.map((quote) => (
              <ChartWindow key={quote.symbol} quote={quote} tall={false} />
            ))}
          </div>
        </div>
        <footer className="flex min-h-0 flex-1 gap-[4px] bg-[#303132] pt-[1px] pl-[120px]">
          <div className="w-[42px] border border-b-0 border-[#8a8a8a] bg-[#5a5a5a]" />
          <div className="w-[42px] border border-b-0 border-[#f0f0f0] bg-[#7c7c7c]" />
          <div className="w-[42px] border border-b-0 border-[#8a8a8a] bg-[#5a5a5a]" />
        </footer>
        <ConnectionBar />
      </main>
    </div>
  );
}
